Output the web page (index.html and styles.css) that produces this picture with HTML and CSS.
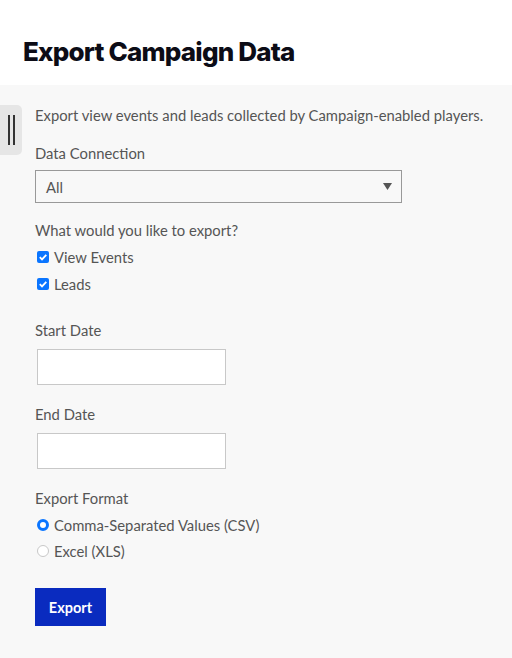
FILE: index.html
```html
<!DOCTYPE html>
<html>
<head>
<meta charset="utf-8">
<link rel="stylesheet" href="styles.css">
</head>
<body>
<header class="header">
  <h1 class="title">Export Campaign Data</h1>
</header>
<main class="panel">
  <div class="handle"><span class="bar"></span><span class="bar"></span></div>
  <form class="form">
    <p class="intro">Export view events and leads collected by Campaign-enabled players.</p>
    <label class="label">Data Connection</label>
    <div class="select">
      <span>All</span>
      <svg class="caret" width="9" height="7" viewBox="0 0 9 7"><path d="M0 0H9L4.5 7Z" fill="#555"/></svg>
    </div>
    <div class="label q">What would you like to export?</div>
    <label class="check"><span class="cb"><svg width="12" height="12" viewBox="0 0 12 12"><rect width="12" height="12" rx="2" fill="#0a75ff"/><path d="M2.8 6.2L5 8.4L9.3 3.8" stroke="#fff" stroke-width="1.8" fill="none"/></svg></span>View Events</label>
    <label class="check"><span class="cb"><svg width="12" height="12" viewBox="0 0 12 12"><rect width="12" height="12" rx="2" fill="#0a75ff"/><path d="M2.8 6.2L5 8.4L9.3 3.8" stroke="#fff" stroke-width="1.8" fill="none"/></svg></span>Leads</label>
    <div class="field">
      <div class="label">Start Date</div>
      <div class="input"></div>
    </div>
    <div class="field">
      <div class="label">End Date</div>
      <div class="input"></div>
    </div>
    <div class="label fmt">Export Format</div>
    <label class="check radio-row"><span class="radio on"></span>Comma-Separated Values (CSV)</label>
    <label class="check radio-row"><span class="radio"></span>Excel (XLS)</label>
    <div class="actions"><button type="button" class="btn">Export</button></div>
  </form>
</main>
</body>
</html>
```
FILE: styles.css
```css
* { box-sizing: border-box; }
html, body { margin: 0; padding: 0; }
body {
  width: 512px;
  height: 658px;
  background: #f8f8f8;
  font-family: Lato, "Noto Sans", sans-serif;
  color: #555;
  overflow: hidden;
}
.header {
  background: #fff;
  height: 85px;
  padding: 36px 0 0 23px;
}
.title {
  margin: 0;
  font-family: Inter, sans-serif;
  font-weight: 800;
  font-size: 26px;
  letter-spacing: -0.8px;
  color: #0c0c16;
  line-height: 32px;
}
.panel {
  position: relative;
  padding: 20px 0 0 35px;
}
.handle {
  position: absolute;
  left: 0;
  top: 20px;
  width: 22px;
  height: 50px;
  background: #e6e6e6;
  border-radius: 0 5px 5px 0;
  display: flex;
  gap: 3px;
  padding: 10px 0 0 8px;
}
.bar {
  width: 2px;
  height: 30px;
  background: #333;
}
.form {
  display: flex;
  flex-direction: column;
  font-size: 14.8px;
}
.intro { margin: 0 0 18px; line-height: 20px; }
.label { display: block; line-height: 20px; }
.select {
  margin-top: 7px;
  width: 367px;
  height: 33px;
  border: 1px solid #999;
  display: flex;
  align-items: center;
  justify-content: space-between;
  padding: 0 9px 0 10px;
  font-size: 14.8px;
}
.q { margin-top: 17px; }
.check {
  display: flex;
  align-items: center;
  line-height: 20px;
  margin-top: 7px;
}
.check + .check { margin-top: 7px; }
.cb { display: flex; margin: 0 5px 0 2px; }
.field { margin-top: 26px; }
.field + .field { margin-top: 19px; }
.input {
  margin: 9px 0 0 2px;
  width: 189px;
  height: 36px;
  background: #fff;
  border: 1px solid #c8c8c8;
}
.fmt { margin-top: 19px; }
.radio-row { margin-top: 7px; }
.check.radio-row + .check.radio-row { margin-top: 6px; }
.radio {
  width: 12px;
  height: 12px;
  border-radius: 50%;
  border: 1px solid #c8c8c8;
  background: #fff;
  margin: 0 5px 0 2px;
}
.radio.on {
  border: 3.5px solid #0a75ff;
}
.actions { margin-top: 27px; }
.btn {
  background: #0a2bbf;
  color: #fff;
  border: 0;
  width: 71px;
  height: 38px;
  font-family: Lato, sans-serif;
  font-weight: 700;
  font-size: 14.5px;
  padding: 0;
}
```
